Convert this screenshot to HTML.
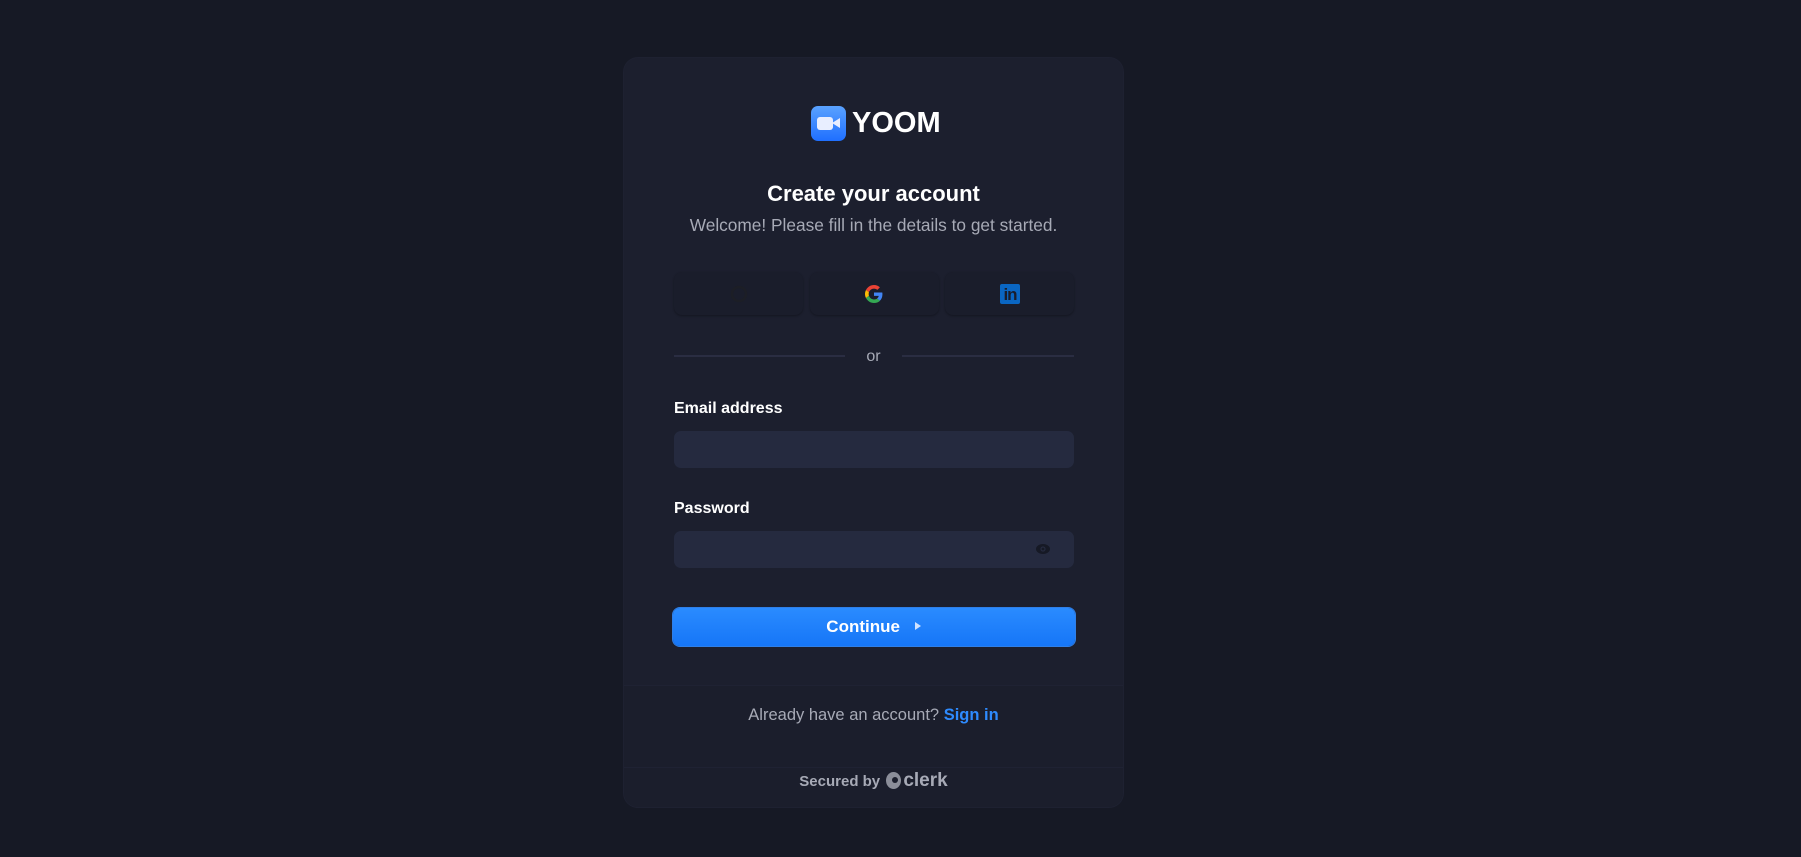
<!DOCTYPE html>
<html><head><meta charset="utf-8"><style>
*{box-sizing:border-box;margin:0;padding:0}
body{width:1801px;height:857px;background:#161925;font-family:"Liberation Sans",sans-serif;position:relative;overflow:hidden}
.card{position:absolute;left:624px;top:58px;width:499px;height:749px;background:#1c1f2e;border-radius:14px;overflow:hidden;box-shadow:0 0 0 1px #1e2131}
.abs{position:absolute}
.c{left:0;width:100%;text-align:center}
.sb{position:absolute;top:214px;width:129px;height:43px;border-radius:8px;background:#1a1d2b;box-shadow:0 1px 2px rgba(0,0,0,.3)}
.inp{position:absolute;left:50px;width:400px;height:37px;background:#252a3f;border-radius:7px}
.lbl{position:absolute;left:50px;color:#fff;font-weight:bold;font-size:16px}
</style></head><body>
<div class="card">
  <div class="abs" style="left:187px;top:48px;width:35px;height:35px;border-radius:7px;background:linear-gradient(#5aa2ff,#1f6fff)">
    <div class="abs" style="left:6px;top:11px;width:16px;height:13px;background:#e8eeff;border-radius:3px"></div>
    <div class="abs" style="left:21px;top:12px;width:0;height:0;border-top:5px solid transparent;border-bottom:5px solid transparent;border-right:8px solid #e8eeff"></div>
  </div>
  <div class="abs" style="left:228px;top:49px;color:#fff;font-weight:bold;font-size:29px">YOOM</div>
  <div class="abs c" style="top:123px;color:#fff;font-weight:bold;font-size:22px">Create your account</div>
  <div class="abs c" style="top:157px;color:#a7aab6;font-size:17.3px">Welcome! Please fill in the details to get started.</div>
  <div class="sb" style="left:50px"><svg class="abs" style="left:56px;top:13px" width="18" height="18" viewBox="0 0 18 18"><circle cx="9" cy="9" r="7" fill="none" stroke="#1c1e26" stroke-width="2.5"/></svg></div>
  <div class="sb" style="left:186px"><svg class="abs" style="left:55px;top:13px" width="18" height="18" viewBox="0 0 48 48"><path fill="#EA4335" d="M24 9.5c3.5 0 6.6 1.2 9 3.5l6.7-6.7C35.7 2.5 30.2 0 24 0 14.6 0 6.6 5.4 2.7 13.3l7.8 6C12.4 13.7 17.7 9.5 24 9.5z"/><path fill="#4285F4" d="M46.5 24.5c0-1.600-.1-3.100-.4-4.500H24v9h12.7c-.6 2.9-2.2 5.4-4.7 7.1l7.6 5.9c4.4-4.1 6.9-10.1 6.9-17.5z"/><path fill="#FBBC05" d="M10.5 28.7c-.5-1.4-.8-3-.8-4.7s.3-3.2.8-4.7l-7.8-6C1 16.6 0 20.2 0 24s1 7.4 2.7 10.7l7.8-6z"/><path fill="#34A853" d="M24 48c6.5 0 11.9-2.1 15.9-5.8l-7.6-5.9c-2.1 1.4-4.9 2.3-8.3 2.3-6.3 0-11.6-4.2-13.5-9.9l-7.8 6C6.6 42.6 14.6 48 24 48z"/></svg></div>
  <div class="sb" style="left:321px"><div class="abs" style="left:55px;top:12px;width:20px;height:20px;background:#0a66c2;border-radius:2px;color:#1a1d2b;font-weight:bold;font-size:17px;line-height:22px;text-align:center;letter-spacing:-1px">in</div></div>
  <div class="abs" style="left:50px;top:297px;width:171px;height:2px;background:#2a2d42"></div>
  <div class="abs" style="left:278px;top:297px;width:172px;height:2px;background:#2a2d42"></div>
  <div class="abs c" style="top:290px;color:#a7aab6;font-size:16px">or</div>
  <div class="lbl" style="top:342px">Email address</div>
  <div class="inp" style="top:373px"></div>
  <div class="lbl" style="top:442px">Password</div>
  <div class="inp" style="top:473px"><svg class="abs" style="left:362px;top:12px" width="14" height="12" viewBox="0 0 14 12"><ellipse cx="7" cy="6" rx="7" ry="5" fill="#161925"/><circle cx="7" cy="6" r="2" fill="none" stroke="#252a3f" stroke-width="1.2"/></svg></div>
  <div class="abs" style="left:49px;top:550px;width:402px;height:38px;border-radius:7px;background:linear-gradient(#2a8bff,#1676f7);box-shadow:0 0 0 1px #2f7fe8"></div>
  <div class="abs c" style="top:559px;color:#fff;font-weight:bold;font-size:17px">Continue <span style="display:inline-block;width:0;height:0;border-top:4px solid transparent;border-bottom:4px solid transparent;border-left:6px solid #cfe2ff;margin-left:10px;vertical-align:2px"></span></div>
  <div class="abs" style="left:0;top:627px;width:100%;height:122px;background:#1b1e2c;border-top:1px solid #1f2233"></div>
  <div class="abs" style="left:0;top:709px;width:100%;height:1px;background:#1f2233"></div>
  <div class="abs c" style="top:648px;color:#a7aab6;font-size:16.5px">Already have an account? <span style="color:#2e8bff;font-weight:bold">Sign in</span></div>
  <div class="abs c" style="top:712px;color:#a7aab6;font-size:15px;font-weight:bold">Secured by <span style="display:inline-block;width:15px;height:17px;border-radius:50%;background:#8b8e99;vertical-align:-3px;position:relative;margin:0 2px"><span style="position:absolute;left:6px;top:5px;width:6px;height:6px;border-radius:50%;background:#1b1e2c"></span></span><span style="font-size:19px;color:#a7aab6">clerk</span></div>
</div>
</body></html>
